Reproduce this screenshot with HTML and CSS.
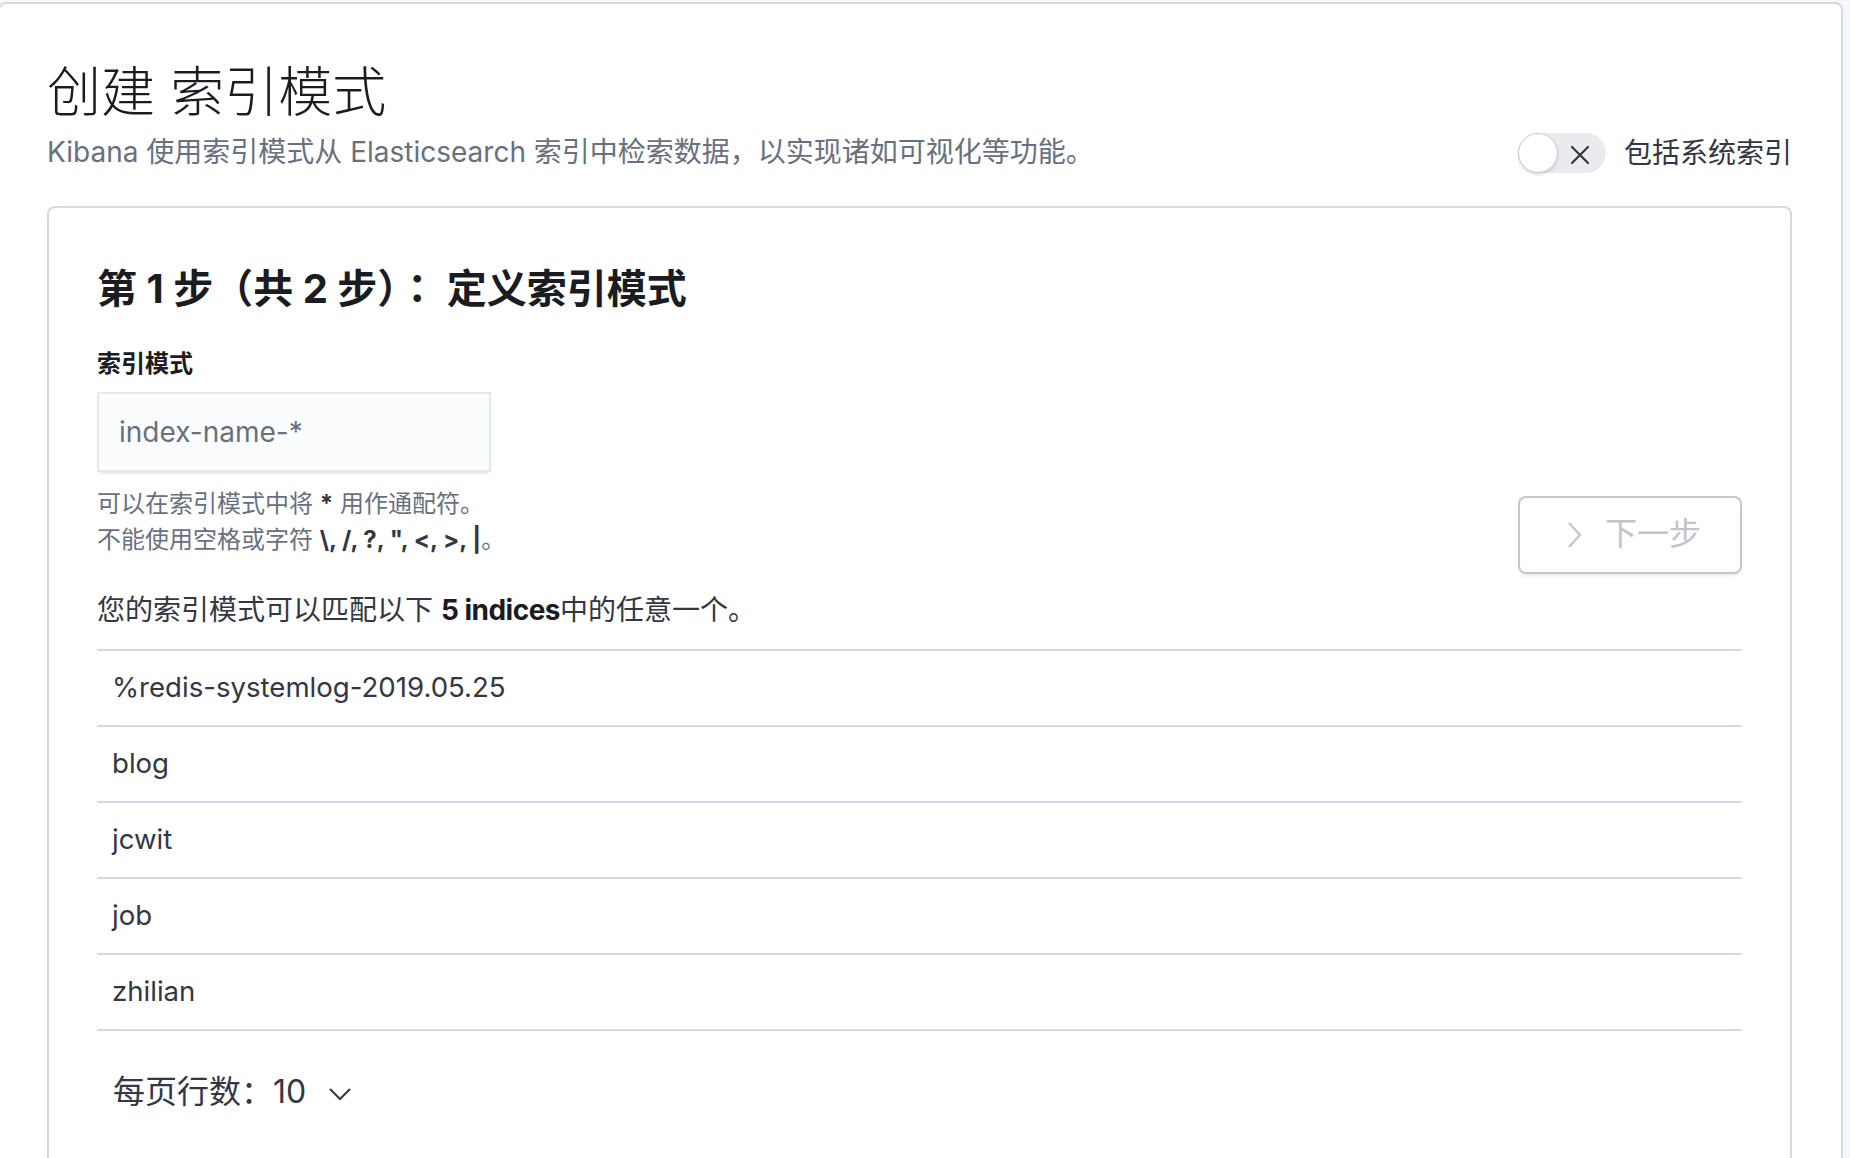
FILE: index.html
```html
<!DOCTYPE html>
<html lang="zh-CN">
<head>
<meta charset="utf-8">
<title>创建 索引模式</title>
<link rel="stylesheet" href="styles.css">
</head>
<body>
<div class="page">
  <header class="page-header">
    <div class="header-text">
      <h1 class="page-title">创建 索引模式</h1>
      <p class="page-subtitle">Kibana 使用索引模式从 Elasticsearch 索引中检索数据，以实现诸如可视化等功能。</p>
    </div>
    <div class="switch-wrap">
      <span class="switch">
        <span class="switch-knob"></span>
        <svg class="switch-x" viewBox="0 0 20 20" width="20" height="20"><path d="M2 2 L18 18 M18 2 L2 18" fill="none" stroke="#343741" stroke-width="2.2" stroke-linecap="round"/></svg>
      </span>
      <span class="switch-label">包括系统索引</span>
    </div>
  </header>

  <section class="card">
    <h2 class="step-title">第 1 步（共 2 步）<span class="centered-punct" lang="zh-TW">：</span> 定义索引模式</h2>
    <div class="form-row">
      <div class="form-group">
        <div class="field-label">索引模式</div>
        <div class="field"><span class="placeholder">index-name-*</span></div>
        <div class="help">
          <div>可以在索引模式中将 <strong>*</strong> 用作通配符。</div>
          <div>不能使用空格或字符 <strong>\, /, ?, ", &lt;, &gt;, |</strong>。</div>
        </div>
      </div>
      <div class="next-btn">
        <svg class="next-icon" viewBox="0 0 16 28" width="16" height="28"><path d="M3 2 L14 14 L3 26" fill="none" stroke="#c2c4c9" stroke-width="2.2"/></svg>
        <span class="next-text">下一步</span>
      </div>
    </div>
    <p class="match-text">您的索引模式可以匹配以下 <strong>5 indices</strong>中的任意一个。</p>
    <ul class="index-list">
      <li>%redis-systemlog-2019.05.25</li>
      <li>blog</li>
      <li>jcwit</li>
      <li>job</li>
      <li>zhilian</li>
    </ul>
    <div class="pagination">
      <span class="per-page-label">每页行数：</span><span class="per-page-value">10</span>
      <svg class="chev-down" viewBox="0 0 24 14" width="24" height="14"><path d="M2 2 L12 12 L22 2" fill="none" stroke="#343741" stroke-width="2"/></svg>
    </div>
  </section>
</div>
</body>
</html>
```

FILE: styles.css
```css
html, body {
  margin: 0;
  padding: 0;
}
body {
  background: #f5f7fa;
  font-family: "Inter", "Noto Sans CJK SC", sans-serif;
  color: #343741;
  overflow: hidden;
}
.page {
  margin: 2px 7px 0 -2px;
  border: 2px solid #d3dae6;
  border-bottom: none;
  border-radius: 8px 8px 0 0;
  background: #ffffff;
  padding: 58px 49px 0 47px;
  height: 1200px;
}
.page-header {
  display: flex;
  justify-content: space-between;
  align-items: flex-end;
}
.page-title {
  margin: 0;
  font-size: 54px;
  line-height: 62px;
  font-weight: 300;
  color: #1a1c21;
}
.page-subtitle {
  margin: 8px 0 0;
  font-size: 28px;
  line-height: 40px;
  color: #69707d;
}
.switch-wrap {
  display: flex;
  align-items: center;
  gap: 18px;
  margin-bottom: -1px;
}
.switch {
  position: relative;
  display: flex;
  align-items: center;
  width: 88px;
  height: 40px;
  border-radius: 20px;
  background: #e9ebef;
}
.switch-knob {
  width: 38px;
  height: 38px;
  border-radius: 50%;
  background: #fff;
  border: 1px solid #c9cbcf;
  box-shadow: 0 2px 3px rgba(0, 0, 0, 0.12);
}
.switch-x {
  margin-left: 12px;
  margin-top: 3px;
}
.switch-label {
  font-size: 28px;
  line-height: 40px;
  color: #343741;
}
.card {
  margin-top: 34px;
  border: 2px solid #d3dae6;
  border-bottom: none;
  border-radius: 8px 8px 0 0;
  padding: 54px 48px 0;
  height: 1100px;
}
.step-title {
  margin: 0;
  font-size: 40px;
  line-height: 48px;
  font-weight: 700;
  color: #1a1c21;
}
.centered-punct {
  font-family: "Noto Sans CJK TC", sans-serif;
}
.form-row {
  display: flex;
  justify-content: space-between;
  align-items: flex-end;
}
.field-label {
  margin-top: 35px;
  font-size: 24px;
  line-height: 32px;
  font-weight: 700;
  color: #1a1c21;
}
.field {
  margin-top: 12px;
  width: 394px;
  height: 80px;
  box-sizing: border-box;
  background: #fbfcfd;
  border: 2px solid #e4e7ec;
  box-shadow: 0 3px 3px -2px rgba(152, 162, 179, 0.35);
  display: flex;
  align-items: center;
  padding-left: 20px;
}
.placeholder {
  font-size: 28px;
  color: #69707d;
}
.help {
  margin: 14px 0 16px;
  font-size: 24px;
  line-height: 36px;
  color: #69707d;
}
.help strong {
  color: #343741;
}
.next-btn {
  width: 224px;
  height: 78px;
  box-sizing: border-box;
  border: 2px solid #c5c6ca;
  border-radius: 8px;
  box-shadow: 0 3px 4px -2px rgba(152, 162, 179, 0.35);
  display: flex;
  align-items: center;
  padding-left: 46px;
  gap: 23px;
}
.next-text {
  font-size: 32px;
  line-height: 40px;
  margin-top: -3px;
  color: #c2c4c9;
}
.match-text {
  margin: 16px 0 0;
  font-size: 28px;
  line-height: 40px;
  color: #343741;
}
.match-text strong {
  color: #1a1c21;
  letter-spacing: -0.5px;
}
.index-list {
  list-style: none;
  margin: 19px 0 0;
  padding: 0;
  border-top: 2px solid #d3dae6;
}
.index-list li {
  height: 74px;
  line-height: 72px;
  border-bottom: 2px solid #d3dae6;
  padding-left: 15px;
  font-size: 27.6px;
  color: #343741;
}
.pagination {
  margin-top: 41px;
  padding-left: 16px;
  display: flex;
  align-items: center;
  font-size: 32px;
  line-height: 40px;
  color: #343741;
}
.chev-down {
  margin-left: 22px;
  margin-top: 4px;
}
```
